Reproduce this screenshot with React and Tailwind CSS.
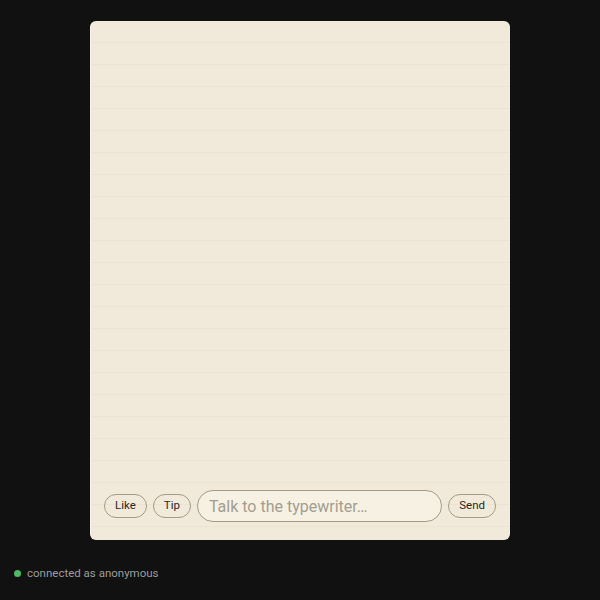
export default function App() {
  return (
    <div className="min-h-screen bg-[#111111] pt-[21px] font-['Roboto',sans-serif]">
      <div className="mx-auto flex h-[519px] w-[420px] flex-col justify-end rounded-md bg-[#f1eadb] bg-[linear-gradient(to_bottom,transparent_21px,#ebe4d4_21px)] bg-size-[100%_22px] px-[14px] pb-[18px] shadow-[inset_1px_0_0_#f8f3e8]">
        <div className="flex items-center gap-[6px]">
          <button className="h-6 rounded-full border border-[#a49b87] px-[10px] text-[11.5px] text-[#2b2820]">Like</button>
          <button className="h-6 rounded-full border border-[#a49b87] px-[10px] text-[11.5px] text-[#2b2820]">Tip</button>
          <input
            className="h-8 min-w-0 flex-1 rounded-full border border-[#a49b87] bg-[#f7f1e4] px-[11px] text-[16px] text-[#2b2820] outline-none placeholder:text-[#a39d8f]"
            placeholder="Talk to the typewriter…"
          />
          <button className="h-6 rounded-full border border-[#a49b87] px-[10px] text-[11.5px] text-[#2b2820]">Send</button>
        </div>
      </div>
      <div className="mt-[25px] flex items-center gap-[6px] px-[14px] text-[11.5px] leading-4 text-[#9c9c9c]">
        <span className="h-[7px] w-[7px] rounded-full bg-[#4cbb62]"></span>
        <span>connected as anonymous</span>
      </div>
    </div>
  );
}
